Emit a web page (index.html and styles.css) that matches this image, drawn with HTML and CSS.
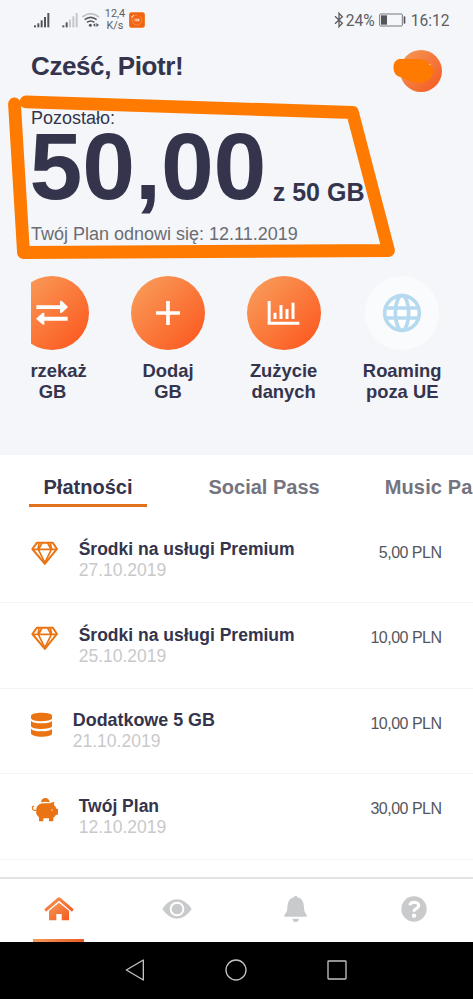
FILE: index.html
```html
<!DOCTYPE html>
<html lang="pl">
<head>
<meta charset="utf-8">
<title>Mój plan</title>
<link rel="stylesheet" href="styles.css">
</head>
<body>
<svg class="defs" width="0" height="0" aria-hidden="true">
  <defs>
    <linearGradient id="warm" x1="0" y1="0" x2="1" y2="1"><stop offset="0" stop-color="#f59a58"/><stop offset="1" stop-color="#f4581f"/></linearGradient>
    <symbol id="gem" viewBox="93 273 83 76">
      <g fill="none" stroke="#ea7413" stroke-width="6" stroke-linejoin="round">
        <path d="M111 278H158L171 297L134.500 342L97 297Z"/>
        <path d="M97 298H171M117 280L114 297L134.500 338L155 297L151 280M117 296L126 279M143 279L152 296" stroke-width="5"/>
      </g>
    </symbol>
  </defs>
</svg>
<div class="phone">
  <header class="hero">
    <div class="status">
      <svg class="signals" width="68" height="20" viewBox="100 32 204 60">
        <g fill="#55565a"><rect x="103" y="75" width="6" height="6"/><rect x="113" y="69" width="6" height="12"/><rect x="123" y="60" width="6" height="21"/><rect x="133" y="50" width="6" height="31"/><rect x="143" y="38" width="6" height="43"/><rect x="188" y="75" width="6" height="6"/><rect x="198" y="66" width="6" height="15"/></g>
        <g fill="#c6c7ca"><rect x="208" y="58" width="6" height="23"/><rect x="218" y="48" width="6" height="33"/><rect x="228" y="38" width="6" height="43"/></g>
        <g fill="none" stroke-width="5"><path stroke="#bfc0c4" d="M248 50Q273 30 298 50"/><path stroke="#55565a" d="M255 58Q273 44 291 58M262 66Q273 58 284 66"/></g>
        <circle cx="272" cy="75" r="4.500" fill="#55565a"/><path fill="#55565a" d="M280 74L287 68V80ZM298 74L290 68V80Z"/>
      </svg>
      <div class="speed">12,4<br>K/s</div>
      <svg class="app-badge" width="16" height="16" viewBox="0 0 48 48"><rect width="47" height="47" x=".5" y=".5" rx="7" fill="#f2640f"/><circle cx="24" cy="24" r="15" fill="none" stroke="#ff9c60" stroke-width="2" stroke-dasharray="70 8"/><path d="M7 16L15 9" stroke="#fff" stroke-width="3"/><path d="M18 20V28M22 20V28M26 21H30V27H26Z" stroke="#ffe3d0" stroke-width="2.500" fill="none"/></svg>
      <svg class="bluetooth" width="10" height="16" viewBox="0 0 30 48"><path d="M3 13L25 34L15 44V4L25 14L3 35" fill="none" stroke="#5d5e62" stroke-width="4"/></svg>
      <span class="status-text percent">24%</span>
      <svg class="battery" width="27" height="14" viewBox="0 0 81 42"><rect x="2" y="3" width="68" height="36" rx="3" fill="none" stroke="#77787c" stroke-width="3"/><rect x="6" y="7" width="18" height="28" fill="#55565a"/><rect x="74" y="10" width="5" height="22" rx="2" fill="#55565a"/></svg>
      <span class="status-text clock">16:12</span>
    </div>
    <h1 class="greeting">Cześć, Piotr!</h1>
    <p class="left-label">Pozostało:</p>
    <p class="allowance"><span class="amount-left">50,00</span><span class="total">z 50 GB</span></p>
    <p class="renewal">Twój Plan odnowi się: 12.11.2019</p>
    <div class="actions">
      <div class="action">
        <div class="disc"><svg width="34" height="28" viewBox="106 102 102 84"><g fill="#fff"><path d="M110 121H181V107L187 108L205 126L187 143L181 144V132H110Z"/><path d="M204 155H134V143L128 144L109 161L128 178L134 180V167H204Z"/></g></svg></div>
        <span>Przekaż<br>GB</span>
      </div>
      <div class="action">
        <div class="disc"><svg width="26" height="26" viewBox="0 0 78 78"><path d="M39 3V75M3 39H75" stroke="#fff" stroke-width="11"/></svg></div>
        <span>Dodaj<br>GB</span>
      </div>
      <div class="action">
        <div class="disc"><svg width="33" height="26" viewBox="103 105 99 78"><path d="M109.500 108V174.500H200" fill="none" stroke="#fff" stroke-width="9"/><path d="M127 143V162M145 120V162M163 132V162M181 113V162" stroke="#fff" stroke-width="9"/></svg></div>
        <span>Zużycie<br>danych</span>
      </div>
      <div class="action">
        <div class="disc pale"><svg width="40" height="40" viewBox="0 0 120 120"><circle cx="60" cy="60" r="52" fill="#fff"/><g fill="none" stroke="#b5daef" stroke-width="11"><circle cx="60" cy="60" r="52"/><ellipse cx="60" cy="60" rx="20" ry="52"/><path d="M12 45H108M12 75H108"/></g></svg></div>
        <span>Roaming<br>poza UE</span>
      </div>
    </div>
    <svg class="marker" width="473" height="300" viewBox="0 0 473 300">
      <circle cx="421" cy="71" r="21" fill="url(#warm)"/>
      <path d="M399 59H417Q427 59 430 65Q433 66 433 72Q432 80 424 82Q415 85 408 80L400 77Q393.500 75 393.500 68Q393 61 399 59Z" fill="#ff7a00"/>
      <circle cx="430" cy="64.500" r=".8" fill="#ffc08a"/>
      <g fill="none" stroke="#ff7a00" stroke-width="12.800" stroke-linecap="round" stroke-linejoin="round"><path d="M14.500 104L23.500 252.500L388.500 250.500L352.500 112.500L26 101.800"/></g>
    </svg>
  </header>
  <main class="panel">
    <nav class="tabs"><a class="tab active">Płatności</a><a class="tab social">Social Pass</a><a class="tab music">Music Pass</a></nav>
    <ul class="history">
      <li><svg width="27.700" height="25.300"><use href="#gem"/></svg><div class="entry"><b>Środki na usługi Premium</b><time>27.10.2019</time></div><span class="price">5,00 PLN</span></li>
      <li><svg width="27.700" height="25.300"><use href="#gem"/></svg><div class="entry"><b>Środki na usługi Premium</b><time>25.10.2019</time></div><span class="price">10,00 PLN</span></li>
      <li><svg width="21.300" height="25.300" viewBox="93 127 64 76"><g fill="#ea7413"><path d="M93 139C93 126 157 126 157 139V145C157 158 93 158 93 145Z"/><path d="M93 153Q99 161 125 161T157 153V168C157 181 93 181 93 168Z"/><path d="M93 177Q99 185 125 185T157 177V190C157 205 93 205 93 190Z"/></g></svg><div class="entry wide"><b>Dodatkowe 5 GB</b><time>21.10.2019</time></div><span class="price">10,00 PLN</span></li>
      <li><svg width="27.700" height="25.300" viewBox="93 383 83 76"><g fill="#ea7413"><path d="M123 399A13 13 0 0 1 149 399Q136 395 123 399Z"/><path d="M109 417Q114 402 132 402H150Q157 398 163 398L162 407Q168 412 169 418H174V436H168Q165 442 160 445V456H147V447H130V456H117V444Q106 435 109 424Z"/></g><path d="M110 423Q97 425 97 416Q97 409 102 412" fill="none" stroke="#ea7413" stroke-width="3.500"/><circle cx="156" cy="422" r="2.500" fill="#ffe0c5"/></svg><div class="entry"><b>Twój Plan</b><time>12.10.2019</time></div><span class="price">30,00 PLN</span></li>
    </ul>
  </main>
  <nav class="bottom">
    <a class="current"><svg width="30" height="25" viewBox="132 110 90 75"><g fill="url(#warm)"><path d="M147 180V151L177 127L207 151V180H185V161H169V180Z"/><path d="M133 147L172 113Q177 109 182 113L221 147L216 154L177 121L138 154Z"/></g></svg></a>
    <a><svg width="30" height="22" viewBox="487 113 90 66"><path d="M488 146Q507 117 532 117T576 146Q557 175 532 175T488 146Z" fill="#c9cacb"/><circle cx="532" cy="146" r="19" fill="none" stroke="#fff" stroke-width="6"/><path d="M532 131A15 15 0 1 1 518 150Q530 152 532 143Z" fill="#c9cacb"/></svg></a>
    <a><svg width="25" height="28" viewBox="150 105 75 84"><g fill="#c9cacb"><path d="M183 112A5 5 0 0 1 193 112Q213 116 213 142C213 157 218 160 221 165V170H154V165C158 160 163 157 163 142Q163 116 183 112Z"/><path d="M178 176H198Q196 186 188 186T178 176Z"/></g></svg></a>
    <a><svg width="26" height="26" viewBox="504 107 78 78"><circle cx="543" cy="146" r="38" fill="#c9cacb"/><path d="M530 135Q533 126 544 126Q557 127 557 136Q557 141 550 145Q543 148 543 154" fill="none" stroke="#fff" stroke-width="9"/><circle cx="543" cy="166" r="6.500" fill="#fff"/></svg></a>
  </nav>
  <footer class="system">
    <svg width="20" height="22" viewBox="0 0 60 66"><path d="M4 33L55 3V63Z" fill="none" stroke="#c2c2c2" stroke-width="4" stroke-linejoin="round"/></svg>
    <svg width="22" height="22" viewBox="0 0 66 66"><circle cx="33" cy="33" r="30" fill="none" stroke="#c2c2c2" stroke-width="4"/></svg>
    <svg width="20" height="20" viewBox="0 0 60 60"><rect x="3" y="3" width="54" height="54" rx="2" fill="none" stroke="#c2c2c2" stroke-width="4"/></svg>
  </footer>
</div>
</body>
</html>
```
FILE: styles.css
```css
* { box-sizing: border-box; }
body { margin: 0; background: #fff; color: #34344c; font-family: "Liberation Sans", Arial, sans-serif; }
h1, p, ul { margin: 0; padding: 0; }
svg { display: block; flex: none; }
.defs { position: absolute; }
.phone { width: 473px; height: 999px; display: flex; flex-direction: column; overflow: hidden; }

.hero { position: relative; height: 454.600px; flex: none; padding: 0 31px; background: #f4f6fa; }
.marker { position: absolute; left: 0; top: 0; pointer-events: none; }
.status { display: flex; align-items: center; height: 40px; margin: 0 -31px 0 2px; color: #5d5e62; font-family: Roboto, sans-serif; }
.signals { margin-top: 1px; }
.speed { width: 22px; margin-left: 3px; font-size: 10.800px; line-height: 12.500px; text-align: center; }
.app-badge { margin-left: 3px; }
.bluetooth { margin-left: auto; }
.status-text { font-size: 15.600px; line-height: 20px; margin-top: 1px; }
.percent { margin-left: 2px; }
.battery { margin: 0 5px 0 4px; }
.clock { width: 62.300px; }

.greeting { margin-top: 11px; font-size: 26px; line-height: 30px; letter-spacing: -.4px; }
.left-label { margin-top: 26px; font-size: 18px; line-height: 22px; }
.allowance { display: flex; align-items: flex-start; height: 78px; margin-left: -1.500px; font-weight: bold; white-space: nowrap; }
.amount-left { margin-top: -2px; font-size: 95px; line-height: 78px; letter-spacing: -.2px; }
.total { margin: 48px 0 0 6.500px; font-size: 25px; line-height: 30px; }
.renewal { margin-top: 16px; font-size: 18px; line-height: 22px; color: #6b6c72; }
.actions { display: flex; margin-top: 30.700px; overflow: hidden; justify-content: flex-end; }
.action { flex: none; width: 115.600px; display: flex; flex-direction: column; align-items: center; text-align: center; font-size: 18.400px; line-height: 21px; font-weight: bold; }
.action:last-child { width: 121.600px; margin-right: -21px; }
.disc { display: grid; place-items: center; width: 74px; height: 74px; margin-bottom: 10px; border-radius: 50%; background: linear-gradient(135deg, #f99b59 8%, #fc5a20 92%); }
.pale { background: #fafbfd; }

.panel { height: 422.400px; overflow: hidden; background: #fff; }
.tabs { display: flex; padding-top: 20.400px; height: 63.200px; font-size: 20px; line-height: 24px; font-weight: bold; color: #74747f; white-space: nowrap; }
.tab { flex: none; }
.active { width: 118px; height: 32px; margin-left: 29px; text-align: center; color: #34344c; border-bottom: 3px solid #e2711d; }
.social { margin-left: 61.500px; }
.music { margin-left: 65px; letter-spacing: .15px; }
.history { list-style: none; }
.history li { display: flex; align-items: flex-start; height: 85.500px; padding: 21.300px 31.500px 0 31px; border-bottom: 1px solid #f3f3f5; }
.history svg { margin-top: 1.700px; }
.entry { display: flex; flex-direction: column; margin-left: 20px; font-size: 17.500px; line-height: 21px; }
.entry.wide { margin-left: 20.500px; }
.entry.wide b { font-size: 17.900px; }
.entry time { font-size: 17.500px; color: #c9c9cb; }
.price { margin: 3.700px 0 0 auto; font-size: 16px; line-height: 20px; letter-spacing: -.5px; color: #55565c; }

.bottom { display: flex; height: 65px; flex: none; border-top: 2px solid #e3e3e4; background: #fff; }
.bottom a { flex: 1; display: grid; place-items: center; position: relative; padding-bottom: 2px; }
.current::after { content: ""; position: absolute; left: 33px; bottom: 0; width: 51px; height: 3px; background: linear-gradient(90deg, #f49a5c, #ea5a20); }
.system { display: flex; flex: 1; align-items: center; justify-content: center; gap: 80px; padding-right: 1px; background: #000; }
```
